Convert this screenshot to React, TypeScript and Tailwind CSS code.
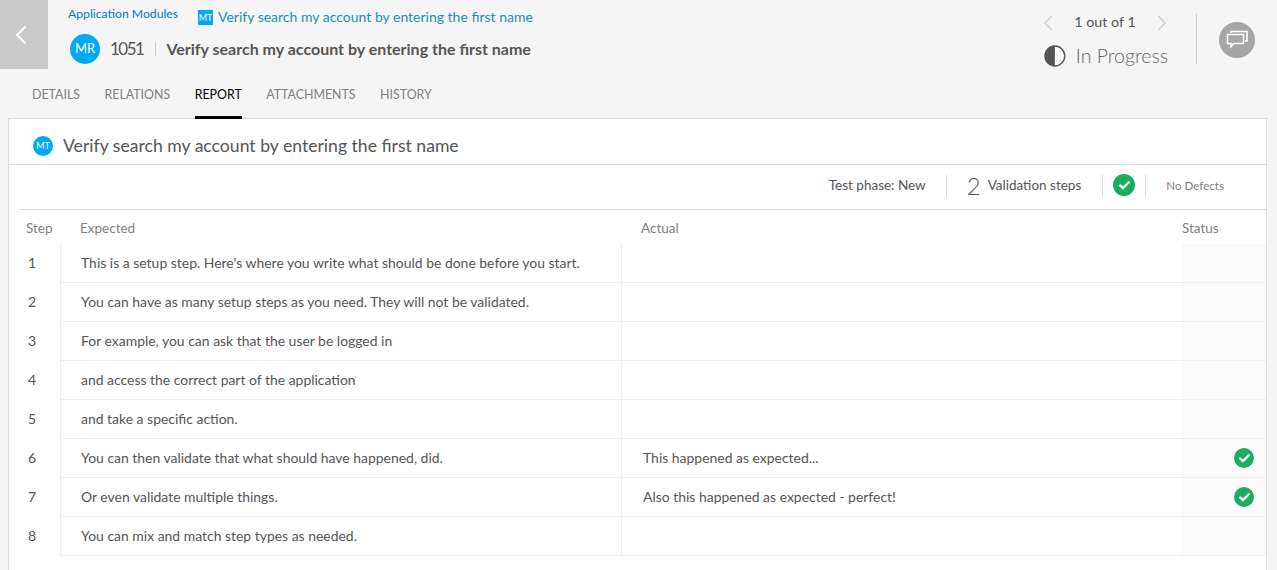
import React from 'react';
import { ChevronLeft, ChevronRight, Check } from 'lucide-react';

const steps = [
  { n: 1, expected: "This is a setup step. Here's where you write what should be done before you start." },
  { n: 2, expected: 'You can have as many setup steps as you need. They will not be validated.' },
  { n: 3, expected: 'For example, you can ask that the user be logged in' },
  { n: 4, expected: 'and access the correct part of the application' },
  { n: 5, expected: 'and take a specific action.' },
  { n: 6, expected: 'You can then validate that what should have happened, did.', actual: 'This happened as expected...', ok: true },
  { n: 7, expected: 'Or even validate multiple things.', actual: 'Also this happened as expected - perfect!', ok: true },
  { n: 8, expected: 'You can mix and match step types as needed.' },
];

const tabs = ['DETAILS', 'RELATIONS', 'REPORT', 'ATTACHMENTS', 'HISTORY'];

const CheckBadge = ({ size }: { size: string }) => (
  <div className={`${size} rounded-full bg-[#1aac60] flex items-center justify-center`}>
    <Check className="w-[13px] h-[13px] text-white" strokeWidth={4.5} />
  </div>
);

const App = () => {
  return (
    <div className="w-[1277px] h-[570px] overflow-hidden bg-[#f5f5f5] font-['Lato','Noto_Sans',sans-serif] text-[#555]">
      {/* Header */}
      <div className="flex h-[69px]">
        <div className="w-[48px] h-[69px] bg-[#c9c9c9] flex items-center justify-center shrink-0">
          <ChevronLeft className="w-8 h-8 text-white -ml-[6px]" strokeWidth={1.5} />
        </div>
        <div className="ml-[20px] flex flex-col w-[800px]">
          <div className="flex items-start h-[30px]">
            <span className="text-[12.2px] text-[#0073e7] mt-[5px] w-[130px]">Application Modules</span>
            <span className="w-[15px] h-[15px] bg-[#01a9f4] text-white text-[9px] flex items-center justify-center mt-[10px]">MT</span>
            <span className="text-[14px] text-[#1a8fb0] ml-[5px] mt-[6px]">Verify search my account by entering the first name</span>
          </div>
          <div className="flex items-center ml-[2px] mt-[4px]">
            <div className="w-[30px] h-[30px] rounded-full bg-[#01a9f4] text-white text-[13px] flex items-center justify-center">MR</div>
            <span className="text-[17px] tracking-[-1.5px] text-[#555] ml-[10px]">1051</span>
            <span className="w-px h-[14px] bg-[#ccc] ml-[12px]" />
            <span className="text-[16px] font-bold text-[#555] ml-[10px]">Verify search my account by entering the first name</span>
          </div>
        </div>
        <div className="ml-auto flex">
          <div className="w-[124px] flex flex-col">
            <div className="flex items-center justify-between h-[24px] mt-[11px]">
              <ChevronLeft className="w-[26px] h-[26px] text-[#ccc] -ml-[9px]" strokeWidth={1.25} />
              <span className="text-[14.3px] text-[#555] -mt-[2px]">1 out of 1</span>
              <ChevronRight className="w-[26px] h-[26px] text-[#ccc] -mr-[7px]" strokeWidth={1.25} />
            </div>
            <div className="flex items-center mt-[6px]">
              <svg width="22" height="22" viewBox="0 0 22 22">
                <circle cx="11" cy="11" r="10" fill="#fff" stroke="#555" strokeWidth="1.5" />
                <path d="M11 1a10 10 0 0 0 0 20z" fill="#555" />
              </svg>
              <span className="text-[19.5px] font-light text-[#666] ml-[10px] whitespace-nowrap">In Progress</span>
            </div>
          </div>
          <div className="w-px h-[50px] bg-[#ccc] mt-[14px] ml-[28px]" />
          <div className="w-[36px] h-[36px] rounded-full bg-[#a6a6a6] mt-[22px] ml-[22px] mr-[22px] flex items-center justify-center">
            <svg width="22" height="20" viewBox="0 0 22 20" fill="none" stroke="#fff" strokeWidth="1.6">
              <path d="M5 3V1.5h16V11h-2" />
              <path d="M1.5 4.5h16V13.5H8l-3 3v-3H1.5z" />
            </svg>
          </div>
        </div>
      </div>

      {/* Tabs */}
      <div className="flex h-[50px] pl-[32px] gap-[24.5px] text-[12.4px]">
        {tabs.map((tab) => (
          <div
            key={tab}
            className={`pt-[17px] ${tab === 'REPORT' ? 'text-black border-b-[3px] border-black' : 'text-[#808080]'}`}
          >
            {tab}
          </div>
        ))}
      </div>

      {/* Panel */}
      <div className="-mt-px ml-[8px] w-[1259px] h-[460px] bg-white border border-[#dcdcdc]">
        <div className="h-[46px] flex items-center pl-[24px] pt-[10px] border-b border-[#dcdcdc]">
          <div className="w-[20px] h-[20px] rounded-full bg-[#01a9f4] text-white text-[9px] flex items-center justify-center -mt-[2px]">MT</div>
          <span className="text-[17.6px] text-[#555] ml-[10px]">Verify search my account by entering the first name</span>
        </div>
        <div className="ml-[10px] h-[45px] flex items-center justify-end border-b border-[#dcdcdc] pr-[42px] pb-[2px]">
          <span className="text-[13.5px] text-[#555] -mt-[1px]">Test phase: New</span>
          <div className="w-px h-[22px] bg-[#ddd] ml-[20px]" />
          <span className="text-[24px] font-light text-[#555] ml-[20px] -mt-[1px]">2</span>
          <span className="text-[13.5px] text-[#555] ml-[7px] -mt-[1px]">Validation steps</span>
          <div className="w-px h-[22px] bg-[#ddd] ml-[21px] mr-[10px]" />
          <div className="-mt-[2px]">
            <CheckBadge size="w-[22px] h-[22px]" />
          </div>
          <div className="w-px h-[22px] bg-[#ddd] ml-[10px]" />
          <span className="text-[11.6px] text-[#808080] ml-[20px]">No Defects</span>
        </div>

        <div className="ml-[10px]">
          <div className="flex h-[34px] items-center pt-[2px] text-[13.5px] text-[#808080]">
            <div className="w-[41px] pl-[7px]">Step</div>
            <div className="w-[561px] pl-[20px]">Expected</div>
            <div className="w-[561px] pl-[20px]">Actual</div>
            <div>Status</div>
          </div>
          {steps.map((step) => (
            <div key={step.n} className="flex h-[39px]">
              <div className="w-[42px] pl-[9px] pt-[8px] text-[14px] text-[#555] border-r border-[#eee] shrink-0">{step.n}</div>
              <div className="w-[561px] pl-[20px] pt-[9px] text-[13.95px] text-[#555] border-b border-r border-[#eee] shrink-0">{step.expected}</div>
              <div className="w-[560px] pl-[21px] pt-[9px] text-[13.95px] text-[#555] border-b border-[#eee] shrink-0">{step.actual}</div>
              <div className="flex-1 bg-[#fafafa] border-b border-[#eee] flex items-center justify-end pr-[12px]">
                {step.ok && <CheckBadge size="w-[20px] h-[20px]" />}
              </div>
            </div>
          ))}
        </div>
      </div>
    </div>
  );
};

export default App;
